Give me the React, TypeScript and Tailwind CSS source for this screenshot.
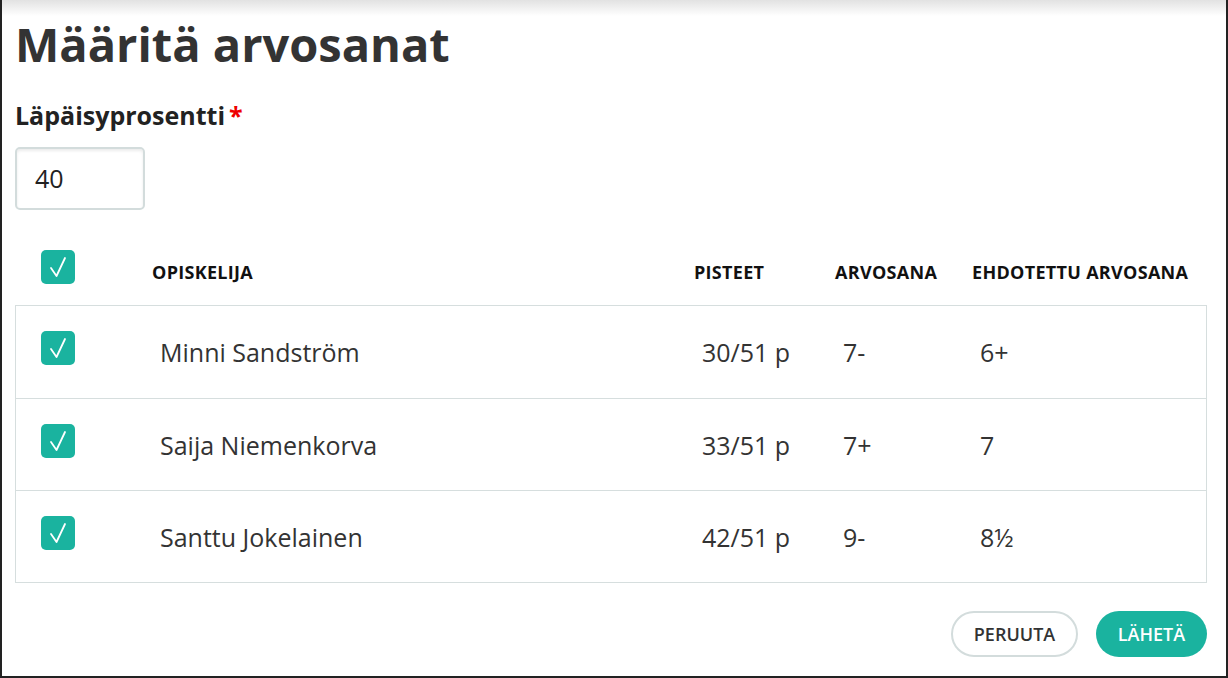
import React from "react";

const Check = () => (
  <div className="flex h-[34px] w-[34px] items-center justify-center rounded-[5px] bg-[#1ab39f]">
    <svg width="22" height="24" viewBox="0 0 22 24" fill="none">
      <path d="M4 13 L9.5 21 L18 3" stroke="white" strokeWidth="1.8" strokeLinecap="round" strokeLinejoin="round" />
    </svg>
  </div>
);

const rows = [
  { name: "Minni Sandström", pts: "30/51 p", grade: "7-", sugg: "6+" },
  { name: "Saija Niemenkorva", pts: "33/51 p", grade: "7+", sugg: "7" },
  { name: "Santtu Jokelainen", pts: "42/51 p", grade: "9-", sugg: "8½" },
];

export default function App() {
  return (
    <div
      className="relative h-[678px] w-full overflow-hidden border-b-2 border-l-2 border-r-2 border-[#222] bg-white text-[#333]"
      style={{ fontFamily: "'Open Sans', 'Noto Sans', sans-serif" }}
    >
      <div className="pointer-events-none absolute left-0 right-0 top-0 h-[16px] bg-gradient-to-b from-[#e2e2e2] to-white" />
      <div className="relative flex flex-col pl-[13px] pr-[19px] pt-[16px]">
        <h1 className="text-[47px] font-bold leading-[56px] text-[#333]">Määritä arvosanat</h1>
        <div className="mt-[28px] flex text-[25px] font-bold leading-[30px] text-[#222]">
          Läpäisyprosentti<span className="ml-[4px] text-[#e00]">*</span>
        </div>
        <div className="mt-[17px] flex h-[63px] w-[130px] items-center rounded-[5px] border-2 border-[#d3dcdc] pl-[18px] text-[25px] text-[#222] shadow-[inset_0_2px_3px_rgba(0,0,0,0.08)]">
          40
        </div>

        <div className="mt-[40px] grid h-[55px] grid-cols-[137px_542px_141px_137px_1fr] items-start text-[18px] font-bold uppercase leading-[24px] tracking-[0.3px] text-[#111]">
          <div className="pl-[26px]">
            <Check />
          </div>
          <div className="pt-[10px]">Opiskelija</div>
          <div className="pt-[10px]">Pisteet</div>
          <div className="pt-[10px]">Arvosana</div>
          <div className="pt-[10px]">Ehdotettu arvosana</div>
        </div>

        <div className="flex flex-col border border-[#d6dede]">
          {rows.map((r, i) => (
            <div
              key={r.name}
              className={`grid grid-cols-[136px_542px_141px_137px_1fr] items-center text-[25px] leading-[32px] text-[#333] ${i > 0 ? "h-[92px] border-t border-[#d6dede]" : "h-[92px]"}`}
            >
              <div className="pb-[8px] pl-[25px]">
                <Check />
              </div>
              <div className="pl-[8px]">{r.name}</div>
              <div className="pl-[8px]">{r.pts}</div>
              <div className="pl-[8px]">{r.grade}</div>
              <div className="pl-[8px]">{r.sugg}</div>
            </div>
          ))}
        </div>

        <div className="mt-[28px] flex justify-end gap-[18px]">
          <button className="h-[46px] w-[127px] rounded-full border-2 border-[#d3dcdc] bg-white text-[18px] font-semibold text-[#333]">
            PERUUTA
          </button>
          <button className="h-[46px] w-[111px] rounded-full bg-[#1ab39f] text-[18px] font-semibold text-white">
            LÄHETÄ
          </button>
        </div>
      </div>
    </div>
  );
}
